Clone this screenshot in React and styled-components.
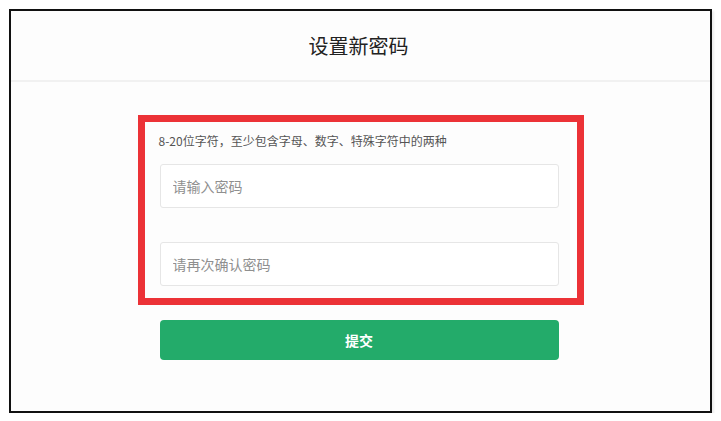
import React, { useState } from "react";
import styled, { createGlobalStyle } from "styled-components";

const GlobalStyle = createGlobalStyle`
    html, body {
        margin: 0;
        padding: 0;
        background: #ffffff;
    }
    body {
        font-family: "Noto Sans CJK SC", "Noto Sans", sans-serif;
    }
    * {
        box-sizing: border-box;
    }
`;

const App = () => {
    const [form, setForm] = useState({ password: "", confirm: "" });

    const handleChange = (ev) => {
        const { name, value } = ev.target;
        setForm((prev) => ({ ...prev, [name]: value }));
    };

    return (
        <>
            <GlobalStyle />
            <Frame>
                <Header>
                    <Title>设置新密码</Title>
                </Header>
                <Body>
                    <Highlight>
                        <Hint>8-20位字符，至少包含字母、数字、特殊字符中的两种</Hint>
                        <Field
                            type="password"
                            name="password"
                            value={form.password}
                            onChange={handleChange}
                            placeholder="请输入密码"
                        />
                        <Field
                            type="password"
                            name="confirm"
                            value={form.confirm}
                            onChange={handleChange}
                            placeholder="请再次确认密码"
                            $gap={34}
                        />
                    </Highlight>
                    <SubmitButton type="button">提交</SubmitButton>
                </Body>
            </Frame>
        </>
    );
};

export default App;

const Frame = styled.div`
    margin: 9px 0 0 9px;
    width: 703px;
    height: 404px;
    border: 2px solid #111;
    background: #fdfdfd;
    display: flex;
    flex-direction: column;
    box-shadow: 2px 2px 2px rgba(0, 0, 0, 0.08);
`;

const Header = styled.div`
    height: 71px;
    display: flex;
    align-items: center;
    justify-content: center;
    border-bottom: 2px solid #f1f1f1;
    padding-right: 4px;
`;

const Title = styled.h1`
    margin: 0;
    font-size: 20px;
    font-weight: 400;
    color: #222;
`;

const Body = styled.div`
    padding-top: 33px;
    display: flex;
    flex-direction: column;
    align-items: center;
`;

const Highlight = styled.div`
    width: 446px;
    height: 190px;
    border: 7px solid #ec3237;
    padding: 10px 18px 0 14px;
    display: flex;
    flex-direction: column;
`;

const Hint = styled.div`
    font-size: 12px;
    line-height: 18px;
    color: #555;
    height: 18px;
`;

const Field = styled.input`
    width: 399px;
    height: 44px;
    margin-top: ${(props) => props.$gap || 14}px;
    margin-left: 1px;
    border: 1px solid #e6e6e6;
    border-radius: 3px;
    background: #fff;
    padding: 0 12px;
    font-family: inherit;
    font-size: 14px;
    color: #333;
    outline: none;

    &::placeholder {
        color: #8f8f8f;
    }

    &:focus {
        border-color: #22aa6a;
    }
`;

const SubmitButton = styled.button`
    margin-top: 15px;
    margin-right: 3px;
    width: 399px;
    height: 40px;
    border: none;
    border-radius: 4px;
    background: #23ab6a;
    color: #fff;
    font-family: inherit;
    font-size: 14px;
    font-weight: 700;
    cursor: pointer;

    &:hover {
        background: #1f9a5f;
    }
`;
